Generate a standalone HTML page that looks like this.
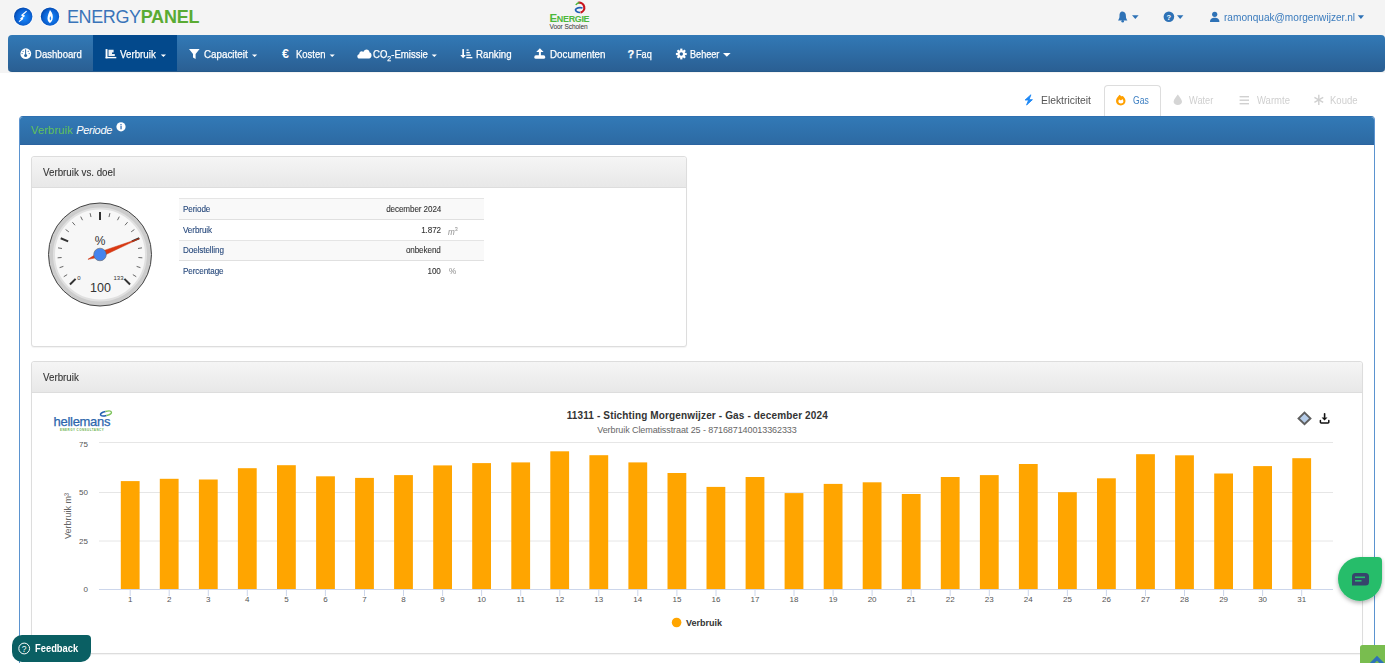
<!DOCTYPE html>
<html><head><meta charset="utf-8">
<style>
*{box-sizing:border-box;margin:0;padding:0}
html,body{width:1385px;height:663px;overflow:hidden;background:#fff;font-family:"Liberation Sans",sans-serif;position:relative}
.abs{position:absolute}
#header{left:0;top:0;width:1385px;height:73px;background:#f4f4f4}
.t{position:absolute;white-space:nowrap;line-height:1}
#nav{left:8px;top:35px;width:1377px;height:37px;border-radius:4px;background:linear-gradient(#3279b6,#2a5f93);border-bottom:1px solid #265a8b}
#nav .active{position:absolute;left:85px;top:0;width:84px;height:36px;background:#03498c}
.nt{color:#fff;font-size:11px;-webkit-text-stroke:0.25px #fff;transform-origin:0 0}
.tabt{font-size:11px;transform-origin:0 0}
#panel{left:19px;top:116px;width:1356px;height:600px;border:1px solid #5b93cf;border-top-color:#2f70b0;border-radius:4px 4px 0 0;background:#fff}
#phead{left:0;top:0;width:1354px;height:28px;background:linear-gradient(#3279b6,#2d6aa3);border-bottom:1px solid #2b63a0;border-radius:3px 3px 0 0}
.ipanel{border:1px solid #ddd;border-radius:3px;background:#fff;box-shadow:0 1px 1px rgba(0,0,0,.05)}
.ihead{left:0;top:0;height:31px;background:linear-gradient(#f5f5f5,#e8e8e8);border-bottom:1px solid #ddd;border-radius:3px 3px 0 0}
.ht{font-size:11px;color:#333;-webkit-text-stroke:0.1px #333;transform:scaleX(0.887);transform-origin:0 0}
.tbl{font-size:9px;letter-spacing:-0.1px;-webkit-text-stroke:0.1px currentColor;margin-top:0.2px;transform:scaleX(0.9);transform-origin:0 0}
.tbl.r{transform-origin:100% 0}
</style></head><body>
<div id="header" class="abs">
  <!-- logo circles -->
  <svg class="abs" style="left:0;top:0" width="70" height="35">
    <defs>
      <radialGradient id="bg1" cx="0.55" cy="0.55" r="0.6">
        <stop offset="0" stop-color="#1a8cff"/><stop offset="0.7" stop-color="#0a5fd0"/><stop offset="1" stop-color="#0040a0"/>
      </radialGradient>
    </defs>
    <circle cx="23.2" cy="16.6" r="10.2" fill="#fbfbfb"/>
    <circle cx="23.2" cy="16.6" r="9.2" fill="url(#bg1)"/>
    <polyline points="26.6,11.1 21.9,15.3 24.3,15.8 20.8,18.7 22.7,18.7 19,21.6" fill="none" stroke="#fff" stroke-width="1.2" stroke-linejoin="round"/>
    <circle cx="50" cy="16.6" r="10.2" fill="#fbfbfb"/>
    <circle cx="50" cy="16.6" r="9.2" fill="url(#bg1)"/>
    <path d="M50 10 C52.5 13 53.5 16 52.5 19.5 C52 21.5 50.5 22.5 50 23 C49 22.5 47.5 21 47.5 18.5 C47.5 15.5 49 12.5 50 10 Z" fill="#fff"/>
    <path d="M50.3 16 C51.3 17.5 51.5 19 50.5 20.5 C49.5 19.5 49.3 18 50.3 16 Z" fill="#2a8af0"/>
  </svg>
  <div class="t" style="left:67px;top:8px;font-size:18px;color:#3a74b9;letter-spacing:-0.4px">ENERGY<b style="color:#5aab33;font-weight:bold;letter-spacing:-0.2px">PANEL</b></div>
  <!-- center logo -->
  <svg class="abs" style="left:545px;top:0" width="50" height="32">
    <path d="M33 2.8 A5 5 0 1 1 35.5 12.6" fill="none" stroke="#c8141e" stroke-width="2.2"/>
    <path d="M30.8 5 C31.6 3.6 33 2.6 34.5 2.4" fill="none" stroke="#49b83a" stroke-width="1.5"/>
    <path d="M37.5 8 C34.5 7.2 31 8 30.5 9.8 C30.8 11.6 33 12.3 35 12.5" fill="none" stroke="#1e5fb4" stroke-width="1.7"/>
    <text x="4.5" y="22" font-family="Liberation Sans" font-weight="bold" fill="#4cb83c" letter-spacing="-0.35"><tspan font-size="11.5">E</tspan><tspan font-size="9">NERGIE</tspan></text>
    <text x="4.5" y="28.7" font-family="Liberation Sans" font-size="6.6" fill="#333" letter-spacing="-0.1">Voor Scholen</text>
  </svg>
  <!-- right icons -->
  <svg class="abs" style="left:1110px;top:5px" width="275" height="25">
    <g fill="#2e72b6">
      <path d="M12.5 6.6 C10 6.6 9.5 8.8 9.5 11 C9.5 13.5 8.6 14.6 8 15.5 L17.4 15.5 C16.8 14.6 15.9 13.5 15.9 11 C15.9 8.8 15 6.6 12.5 6.6 Z"/>
      <circle cx="12.7" cy="16.3" r="1.3"/>
      <path d="M22 10.3 L28.6 10.3 L25.3 14 Z"/>
      <circle cx="58.9" cy="11.8" r="5.3"/>
      <path d="M67 10.3 L73.4 10.3 L70.2 14 Z"/>
      <circle cx="104.7" cy="9.3" r="2.6"/>
      <path d="M100 17 C100 13.8 102 12.8 104.7 12.8 C107.4 12.8 109.4 13.8 109.4 17 Z"/>
      <path d="M247.8 10.3 L254 10.3 L250.9 14 Z"/>
    </g>
    <text x="58.9" y="14.8" font-family="Liberation Sans" font-weight="bold" font-size="7.5" fill="#fff" text-anchor="middle">?</text>
  </svg>
  <div class="t" style="left:1224px;top:12px;font-size:11px;color:#3a7bbd;transform:scaleX(0.919);transform-origin:0 0">ramonquak@morgenwijzer.nl</div>
</div>

<div id="nav" class="abs">
  <div class="active"></div>
  <svg class="abs" style="left:0;top:0" width="740" height="37">
    <g fill="#fff">
      <!-- dashboard gauge icon -->
      <circle cx="17.8" cy="18.7" r="5.4"/>
      <!-- verbruik chart icon -->
      <rect x="97.6" y="14.1" width="1.9" height="9.2"/>
      <rect x="97.6" y="21.9" width="10.7" height="1.4"/>
      <path d="M100.5 14.8 h5.1 v2.8 h-1.6 v1.5 h2.8 v1.9 h-6.3 Z" opacity="0.92"/>
      <!-- filter -->
      <path d="M181 14 h10.6 l-4 5 v5 l-2.6 -1.5 v-3.5 Z"/>
      <!-- euro -->
      <text x="274" y="23.4" font-family="Liberation Sans" font-weight="bold" font-size="12.5">€</text>
      <!-- cloud -->
      <path d="M351.5 23.5 C348.8 23.5 348.6 19.6 351.2 19.2 C351.2 16.6 353.8 15.6 355.3 17 C356.3 13.4 361.3 13.6 361.6 17.6 C364.2 17.8 364.4 23.5 361 23.5 Z"/>
      <!-- ranking -->
      <rect x="454.3" y="14.1" width="1.7" height="6.5"/><path d="M452.3 20 h5.6 l-2.8 3.3 Z"/>
      <rect x="458.6" y="14.4" width="2" height="1.3"/><rect x="458.3" y="17" width="3.5" height="1.3"/><rect x="458.3" y="19.5" width="4.6" height="1.3"/><rect x="458.3" y="22" width="6.1" height="1.3"/>
      <!-- upload -->
      <path d="M531.9 13.3 L535.6 17 H532.9 V21 H530.9 V17 H528.2 Z"/>
      <rect x="526.3" y="20.3" width="10.9" height="3.5" rx="1.6"/>
      <!-- gear -->
      <circle cx="673.3" cy="19" r="3.8"/>
      <g stroke="#fff" stroke-width="2.2">
        <line x1="673.3" y1="13.6" x2="673.3" y2="24.4"/>
        <line x1="667.9" y1="19" x2="678.7" y2="19"/>
        <line x1="669.5" y1="15.2" x2="677.1" y2="22.8"/>
        <line x1="677.1" y1="15.2" x2="669.5" y2="22.8"/>
      </g>
      <!-- carets -->
      <path d="M152.8 19.5 h5.2 l-2.6 2.6 Z"/>
      <path d="M244 19.5 h5.2 l-2.6 2.6 Z"/>
      <path d="M321.6 19.5 h5.2 l-2.6 2.6 Z"/>
      <path d="M423.7 19.5 h5.2 l-2.6 2.6 Z"/>
      <path d="M715 18 h7.6 l-3.8 3.8 Z"/>
    </g>
    <g fill="#2d69a3"><rect x="17.1" y="14.4" width="1" height="5.6"/><circle cx="17.6" cy="20.5" r="1.5"/><circle cx="15.1" cy="16.3" r="0.6"/><circle cx="20.2" cy="16.3" r="0.6"/><circle cx="14.1" cy="18.6" r="0.6"/><circle cx="21.2" cy="18.6" r="0.6"/></g>
    <circle cx="673.3" cy="19" r="1.7" fill="#2e67a0"/>
  </svg>
  <div class="t nt" style="left:27px;top:14px;transform:scaleX(0.87)">Dashboard</div>
  <div class="t nt" style="left:111.8px;top:14px;transform:scaleX(0.886)">Verbruik</div>
  <div class="t nt" style="left:195.7px;top:14px;transform:scaleX(0.892)">Capaciteit</div>
  <div class="t nt" style="left:287.6px;top:14px;transform:scaleX(0.861)">Kosten</div>
  <div class="t nt" style="left:365px;top:14px;transform:scaleX(0.87)">CO<sub style="font-size:8px;vertical-align:-2.5px">2</sub>-Emissie</div>
  <div class="t nt" style="left:467.5px;top:14px;transform:scaleX(0.882)">Ranking</div>
  <div class="t nt" style="left:541.5px;top:14px;transform:scaleX(0.89)">Documenten</div>
  <div class="t nt" style="left:619.6px;top:14px;font-weight:bold">?</div>
  <div class="t nt" style="left:628.3px;top:14px;transform:scaleX(0.833)">Faq</div>
  <div class="t nt" style="left:682.4px;top:14px;transform:scaleX(0.827)">Beheer</div>
</div>

<!-- tabs -->
<div class="abs" style="left:1104px;top:85px;width:57px;height:32px;border:1px solid #ddd;border-bottom:none;border-radius:4px 4px 0 0;background:#fff"></div>
<svg class="abs" style="left:1015px;top:85px" width="370" height="30">
  <path d="M15.9 9.8 L10.1 15 L13.6 15 L11.6 20 L17.4 14.7 L14 14.7 Z" fill="#1e88f5" stroke="#1e88f5" stroke-width="0.9" stroke-linejoin="round"/>
  <path d="M104.6 9.7 C105.4 10.6 106.6 11.6 107.8 11.1 C109.6 12.6 110.5 14.4 110.5 16 C110.5 18.6 108.4 20.4 105.8 20.4 C103.1 20.4 101 18.6 101 16 C101 13.4 102.8 11.6 104.6 9.7 Z" fill="#ffa000"/>
  <path d="M104.2 14.3 C104.8 15.2 105.6 15.4 106.4 15 C107 14.6 107.3 14.2 107.4 14 C108.1 14.9 108.4 15.8 108.4 16.6 C108.4 17.8 107.3 18.5 105.9 18.5 C104.5 18.5 103.4 17.8 103.4 16.6 C103.4 15.7 103.7 14.9 104.2 14.3 Z" fill="#fff"/>
  <path d="M162.8 9.5 C164.5 12 167 14.5 167 16.8 C167 18.8 165.2 20 162.8 20 C160.4 20 158.6 18.8 158.6 16.8 C158.6 14.5 161.1 12 162.8 9.5 Z" fill="#d5d5d5"/>
  <g fill="#d0d0d0"><rect x="224.6" y="11" width="9.4" height="1.4"/><rect x="224.6" y="14.5" width="9.4" height="1.4"/><rect x="224.6" y="18" width="9.4" height="1.4"/></g>
  <g stroke="#d0d0d0" stroke-width="1.4"><line x1="303.8" y1="9.8" x2="303.8" y2="20"/><line x1="299.4" y1="12.4" x2="308.2" y2="17.4"/><line x1="299.4" y1="17.4" x2="308.2" y2="12.4"/></g>
</svg>
<div class="t tabt" style="left:1041px;top:95px;color:#555;transform:scaleX(0.94)">Elektriciteit</div>
<div class="t tabt" style="left:1133.2px;top:95px;color:#3d7fc2;transform:scaleX(0.78)">Gas</div>
<div class="t tabt" style="left:1189px;top:95px;color:#cfcfcf;transform:scaleX(0.84)">Water</div>
<div class="t tabt" style="left:1256.5px;top:95px;color:#cfcfcf;transform:scaleX(0.864)">Warmte</div>
<div class="t tabt" style="left:1329.7px;top:95px;color:#cfcfcf;transform:scaleX(0.865)">Koude</div>

<!-- main panel -->
<div id="panel" class="abs">
  <div id="phead" class="abs">
    <div class="t" style="left:11px;top:8px;font-size:11px;color:#62c15a;letter-spacing:0.2px">Verbruik <i style="color:#fff;letter-spacing:-0.3px">Periode</i></div>
    <svg class="abs" style="left:96px;top:4px" width="12" height="12"><circle cx="5" cy="5.8" r="4.6" fill="#fff"/><rect x="4.4" y="5" width="1.3" height="3.3" fill="#3a74b9"/><circle cx="5" cy="3.7" r="0.8" fill="#3a74b9"/></svg>
  </div>
</div>

<!-- inner panel 1 -->
<div class="abs ipanel" style="left:31px;top:156px;width:656px;height:191px">
  <div class="abs ihead" style="width:654px"></div>
  <div class="t ht" style="left:11px;top:10px">Verbruik vs. doel</div>
</div>
<!-- table -->
<div class="abs" style="left:179px;top:198px;width:305px;height:1px;background:#e5e5e5"></div>
<div class="abs" style="left:179px;top:199px;width:305px;height:20px;background:#f9f9f9"></div>
<div class="abs" style="left:179px;top:219px;width:305px;height:1px;background:#e0e0e0"></div>
<div class="abs" style="left:179px;top:240px;width:305px;height:1px;background:#e5e5e5"></div>
<div class="abs" style="left:179px;top:241px;width:305px;height:19px;background:#f9f9f9"></div>
<div class="abs" style="left:179px;top:260px;width:305px;height:1px;background:#e0e0e0"></div>
<div class="t tbl" style="left:183px;top:205px;color:#24467a">Periode</div>
<div class="t tbl" style="left:183px;top:226px;color:#24467a">Verbruik</div>
<div class="t tbl" style="left:183px;top:246px;color:#24467a">Doelstelling</div>
<div class="t tbl" style="left:183px;top:267px;color:#24467a">Percentage</div>
<div class="t tbl r" style="right:944px;top:205px;color:#333">december 2024</div>
<div class="t tbl r" style="right:944px;top:226px;color:#333">1.872</div>
<div class="t tbl" style="left:448px;top:226px;color:#999"><i>m</i><sup style="font-size:6px">3</sup></div>
<div class="t tbl r" style="right:944px;top:246px;color:#333">onbekend</div>
<div class="t tbl r" style="right:944px;top:267px;color:#333">100</div>
<div class="t tbl" style="left:449px;top:267px;color:#999">%</div>

<!-- inner panel 2 -->
<div class="abs ipanel" style="left:31px;top:361px;width:1332px;height:293px">
  <div class="abs ihead" style="width:1330px"></div>
  <div class="t ht" style="left:11px;top:10px">Verbruik</div>
</div>

<!-- SVG overlay for gauge and chart -->
<svg class="abs" style="left:0;top:0" width="1385" height="663" font-family="Liberation Sans">
  <!-- gauge -->
  <circle cx="100" cy="254.5" r="51.5" fill="#ccc" stroke="#444" stroke-width="1"/>
  <circle cx="100" cy="254.5" r="46" fill="#f7f7f7" stroke="#e0e0e0" stroke-width="2"/>
  <line x1="75.60" y1="278.90" x2="69.95" y2="284.55" stroke="#333" stroke-width="2"/>
<line x1="67.17" y1="274.62" x2="63.76" y2="276.71" stroke="#666" stroke-width="1"/>
<line x1="63.38" y1="266.40" x2="59.58" y2="267.63" stroke="#666" stroke-width="1"/>
<line x1="61.62" y1="257.52" x2="57.63" y2="257.83" stroke="#666" stroke-width="1"/>
<line x1="61.97" y1="248.48" x2="58.02" y2="247.85" stroke="#666" stroke-width="1"/>
<line x1="68.13" y1="241.30" x2="60.74" y2="238.24" stroke="#333" stroke-width="2"/>
<line x1="68.85" y1="231.87" x2="65.62" y2="229.52" stroke="#666" stroke-width="1"/>
<line x1="75.00" y1="225.22" x2="72.40" y2="222.18" stroke="#666" stroke-width="1"/>
<line x1="82.52" y1="220.20" x2="80.71" y2="216.63" stroke="#666" stroke-width="1"/>
<line x1="91.01" y1="217.06" x2="90.08" y2="213.17" stroke="#666" stroke-width="1"/>
<line x1="100.00" y1="220.00" x2="100.00" y2="212.00" stroke="#333" stroke-width="2"/>
<line x1="108.99" y1="217.06" x2="109.92" y2="213.17" stroke="#666" stroke-width="1"/>
<line x1="117.48" y1="220.20" x2="119.29" y2="216.63" stroke="#666" stroke-width="1"/>
<line x1="125.00" y1="225.22" x2="127.60" y2="222.18" stroke="#666" stroke-width="1"/>
<line x1="131.15" y1="231.87" x2="134.38" y2="229.52" stroke="#666" stroke-width="1"/>
<line x1="131.87" y1="241.30" x2="139.26" y2="238.24" stroke="#333" stroke-width="2"/>
<line x1="138.03" y1="248.48" x2="141.98" y2="247.85" stroke="#666" stroke-width="1"/>
<line x1="138.38" y1="257.52" x2="142.37" y2="257.83" stroke="#666" stroke-width="1"/>
<line x1="136.62" y1="266.40" x2="140.42" y2="267.63" stroke="#666" stroke-width="1"/>
<line x1="132.83" y1="274.62" x2="136.24" y2="276.71" stroke="#666" stroke-width="1"/>
<line x1="124.40" y1="278.90" x2="130.05" y2="284.55" stroke="#333" stroke-width="2"/>
  <text x="100" y="244.5" text-anchor="middle" font-size="12" fill="#333">%</text>
  <text x="79" y="279.5" text-anchor="middle" font-size="6" fill="#333">0</text>
  <text x="118.5" y="279.5" text-anchor="middle" font-size="6" fill="#333">133</text>
  <text x="100.5" y="291.5" text-anchor="middle" font-size="12.5" fill="#333">100</text>
  <polygon points="139.41,238.58 100.96,256.87 87.95,259.37 99.04,252.13" fill="#dc3912" stroke="#c63310" stroke-width="0.5"/>
  <circle cx="100" cy="254.5" r="6.3" fill="#4684ee" stroke="#666" stroke-width="0.6"/>

  <!-- chart -->
  <g stroke="#e6e6e6" stroke-width="1">
    <line x1="99" y1="442.5" x2="1333" y2="442.5"/>
    <line x1="99" y1="492.5" x2="1333" y2="492.5"/>
    <line x1="99" y1="541" x2="1333" y2="541"/>
  </g>
  <rect x="120.8" y="481.1" width="18.8" height="108.4" fill="#ffa500"/>
<rect x="159.8" y="478.8" width="18.8" height="110.7" fill="#ffa500"/>
<rect x="198.9" y="479.5" width="18.8" height="110.0" fill="#ffa500"/>
<rect x="237.9" y="468.2" width="18.8" height="121.3" fill="#ffa500"/>
<rect x="277.0" y="465.2" width="18.8" height="124.3" fill="#ffa500"/>
<rect x="316.1" y="476.3" width="18.8" height="113.2" fill="#ffa500"/>
<rect x="355.1" y="477.9" width="18.8" height="111.6" fill="#ffa500"/>
<rect x="394.1" y="475.1" width="18.8" height="114.4" fill="#ffa500"/>
<rect x="433.2" y="465.4" width="18.8" height="124.1" fill="#ffa500"/>
<rect x="472.2" y="463.1" width="18.8" height="126.4" fill="#ffa500"/>
<rect x="511.3" y="462.4" width="18.8" height="127.1" fill="#ffa500"/>
<rect x="550.3" y="451.3" width="18.8" height="138.2" fill="#ffa500"/>
<rect x="589.4" y="455.2" width="18.8" height="134.3" fill="#ffa500"/>
<rect x="628.4" y="462.4" width="18.8" height="127.1" fill="#ffa500"/>
<rect x="667.5" y="473.0" width="18.8" height="116.5" fill="#ffa500"/>
<rect x="706.5" y="486.9" width="18.8" height="102.6" fill="#ffa500"/>
<rect x="745.6" y="477.0" width="18.8" height="112.5" fill="#ffa500"/>
<rect x="784.6" y="493.1" width="18.8" height="96.4" fill="#ffa500"/>
<rect x="823.7" y="483.9" width="18.8" height="105.6" fill="#ffa500"/>
<rect x="862.7" y="482.3" width="18.8" height="107.2" fill="#ffa500"/>
<rect x="901.8" y="494.0" width="18.8" height="95.5" fill="#ffa500"/>
<rect x="940.8" y="477.0" width="18.8" height="112.5" fill="#ffa500"/>
<rect x="979.9" y="475.1" width="18.8" height="114.4" fill="#ffa500"/>
<rect x="1018.9" y="464.0" width="18.8" height="125.5" fill="#ffa500"/>
<rect x="1058.0" y="492.2" width="18.8" height="97.3" fill="#ffa500"/>
<rect x="1097.0" y="478.3" width="18.8" height="111.2" fill="#ffa500"/>
<rect x="1136.1" y="454.2" width="18.8" height="135.3" fill="#ffa500"/>
<rect x="1175.1" y="455.3" width="18.8" height="134.2" fill="#ffa500"/>
<rect x="1214.2" y="473.5" width="18.8" height="116.0" fill="#ffa500"/>
<rect x="1253.2" y="466.1" width="18.8" height="123.4" fill="#ffa500"/>
<rect x="1292.3" y="458.2" width="18.8" height="131.3" fill="#ffa500"/>
  <line x1="99" y1="589.5" x2="1333" y2="589.5" stroke="#ccd6eb" stroke-width="1"/>
  <line x1="130.2" y1="590" x2="130.2" y2="596" stroke="#ccd6eb" stroke-width="1"/>
<line x1="169.2" y1="590" x2="169.2" y2="596" stroke="#ccd6eb" stroke-width="1"/>
<line x1="208.3" y1="590" x2="208.3" y2="596" stroke="#ccd6eb" stroke-width="1"/>
<line x1="247.3" y1="590" x2="247.3" y2="596" stroke="#ccd6eb" stroke-width="1"/>
<line x1="286.4" y1="590" x2="286.4" y2="596" stroke="#ccd6eb" stroke-width="1"/>
<line x1="325.4" y1="590" x2="325.4" y2="596" stroke="#ccd6eb" stroke-width="1"/>
<line x1="364.5" y1="590" x2="364.5" y2="596" stroke="#ccd6eb" stroke-width="1"/>
<line x1="403.5" y1="590" x2="403.5" y2="596" stroke="#ccd6eb" stroke-width="1"/>
<line x1="442.6" y1="590" x2="442.6" y2="596" stroke="#ccd6eb" stroke-width="1"/>
<line x1="481.6" y1="590" x2="481.6" y2="596" stroke="#ccd6eb" stroke-width="1"/>
<line x1="520.7" y1="590" x2="520.7" y2="596" stroke="#ccd6eb" stroke-width="1"/>
<line x1="559.8" y1="590" x2="559.8" y2="596" stroke="#ccd6eb" stroke-width="1"/>
<line x1="598.8" y1="590" x2="598.8" y2="596" stroke="#ccd6eb" stroke-width="1"/>
<line x1="637.8" y1="590" x2="637.8" y2="596" stroke="#ccd6eb" stroke-width="1"/>
<line x1="676.9" y1="590" x2="676.9" y2="596" stroke="#ccd6eb" stroke-width="1"/>
<line x1="716.0" y1="590" x2="716.0" y2="596" stroke="#ccd6eb" stroke-width="1"/>
<line x1="755.0" y1="590" x2="755.0" y2="596" stroke="#ccd6eb" stroke-width="1"/>
<line x1="794.0" y1="590" x2="794.0" y2="596" stroke="#ccd6eb" stroke-width="1"/>
<line x1="833.1" y1="590" x2="833.1" y2="596" stroke="#ccd6eb" stroke-width="1"/>
<line x1="872.1" y1="590" x2="872.1" y2="596" stroke="#ccd6eb" stroke-width="1"/>
<line x1="911.2" y1="590" x2="911.2" y2="596" stroke="#ccd6eb" stroke-width="1"/>
<line x1="950.2" y1="590" x2="950.2" y2="596" stroke="#ccd6eb" stroke-width="1"/>
<line x1="989.3" y1="590" x2="989.3" y2="596" stroke="#ccd6eb" stroke-width="1"/>
<line x1="1028.3" y1="590" x2="1028.3" y2="596" stroke="#ccd6eb" stroke-width="1"/>
<line x1="1067.4" y1="590" x2="1067.4" y2="596" stroke="#ccd6eb" stroke-width="1"/>
<line x1="1106.4" y1="590" x2="1106.4" y2="596" stroke="#ccd6eb" stroke-width="1"/>
<line x1="1145.5" y1="590" x2="1145.5" y2="596" stroke="#ccd6eb" stroke-width="1"/>
<line x1="1184.5" y1="590" x2="1184.5" y2="596" stroke="#ccd6eb" stroke-width="1"/>
<line x1="1223.6" y1="590" x2="1223.6" y2="596" stroke="#ccd6eb" stroke-width="1"/>
<line x1="1262.6" y1="590" x2="1262.6" y2="596" stroke="#ccd6eb" stroke-width="1"/>
<line x1="1301.7" y1="590" x2="1301.7" y2="596" stroke="#ccd6eb" stroke-width="1"/>
  <g font-size="8" fill="#555">
  <text x="130.2" y="602.3" text-anchor="middle">1</text>
<text x="169.2" y="602.3" text-anchor="middle">2</text>
<text x="208.3" y="602.3" text-anchor="middle">3</text>
<text x="247.3" y="602.3" text-anchor="middle">4</text>
<text x="286.4" y="602.3" text-anchor="middle">5</text>
<text x="325.4" y="602.3" text-anchor="middle">6</text>
<text x="364.5" y="602.3" text-anchor="middle">7</text>
<text x="403.5" y="602.3" text-anchor="middle">8</text>
<text x="442.6" y="602.3" text-anchor="middle">9</text>
<text x="481.6" y="602.3" text-anchor="middle">10</text>
<text x="520.7" y="602.3" text-anchor="middle">11</text>
<text x="559.8" y="602.3" text-anchor="middle">12</text>
<text x="598.8" y="602.3" text-anchor="middle">13</text>
<text x="637.8" y="602.3" text-anchor="middle">14</text>
<text x="676.9" y="602.3" text-anchor="middle">15</text>
<text x="716.0" y="602.3" text-anchor="middle">16</text>
<text x="755.0" y="602.3" text-anchor="middle">17</text>
<text x="794.0" y="602.3" text-anchor="middle">18</text>
<text x="833.1" y="602.3" text-anchor="middle">19</text>
<text x="872.1" y="602.3" text-anchor="middle">20</text>
<text x="911.2" y="602.3" text-anchor="middle">21</text>
<text x="950.2" y="602.3" text-anchor="middle">22</text>
<text x="989.3" y="602.3" text-anchor="middle">23</text>
<text x="1028.3" y="602.3" text-anchor="middle">24</text>
<text x="1067.4" y="602.3" text-anchor="middle">25</text>
<text x="1106.4" y="602.3" text-anchor="middle">26</text>
<text x="1145.5" y="602.3" text-anchor="middle">27</text>
<text x="1184.5" y="602.3" text-anchor="middle">28</text>
<text x="1223.6" y="602.3" text-anchor="middle">29</text>
<text x="1262.6" y="602.3" text-anchor="middle">30</text>
<text x="1301.7" y="602.3" text-anchor="middle">31</text>
  </g>
  <g font-size="8" fill="#555" text-anchor="end">
    <text x="88" y="446.5">75</text>
    <text x="88" y="495">50</text>
    <text x="88" y="543.5">25</text>
    <text x="88" y="592">0</text>
  </g>
  <text transform="translate(71,516) rotate(-90)" text-anchor="middle" font-size="9" fill="#666">Verbruik m³</text>
  <text x="697.3" y="418.5" text-anchor="middle" font-size="10" font-weight="bold" fill="#333" letter-spacing="0.14">11311 - Stichting Morgenwijzer - Gas - december 2024</text>
  <text x="697" y="432.5" text-anchor="middle" font-size="9" fill="#666" letter-spacing="-0.09">Verbruik Clematisstraat 25 - 871687140013362333</text>
  <circle cx="676.6" cy="622.5" r="4.8" fill="#ffa500"/>
  <text x="686" y="626" font-size="9" font-weight="bold" fill="#333">Verbruik</text>
  <!-- hellemans logo -->
  <text x="53.6" y="425.8" font-size="13" fill="#2c65ad" stroke="#2c65ad" stroke-width="0.25" letter-spacing="-0.3">hellemans</text>
  <text x="60" y="430.6" font-size="3" font-weight="bold" fill="#6ab04c" letter-spacing="0.45">ENERGY CONSULTANCY</text>
  <g transform="rotate(-14 106 413.5)"><path d="M106 411.4 A5.6 2.1 0 0 0 106 415.6" fill="none" stroke="#1f5fb0" stroke-width="1.6"/><path d="M106 411.4 A5.6 2.1 0 0 1 106 415.6" fill="none" stroke="#7cc35a" stroke-width="1.4"/></g>
  <!-- export icons -->
  <path d="M1304.5 412.6 L1310.4 418.4 L1304.5 424.2 L1298.6 418.4 Z" fill="#b6cde9" stroke="#606060" stroke-width="2"/>
  <g fill="#111"><rect x="1323.8" y="413" width="1.6" height="5" rx="0.8"/><path d="M1321.6 417.4 h5.9 l-2.95 3 Z"/></g>
  <path d="M1320.4 420.6 v1.6 a0.8 0.8 0 0 0 0.8 0.8 h6.8 a0.8 0.8 0 0 0 0.8 -0.8 v-1.6" fill="none" stroke="#111" stroke-width="1.5" stroke-linecap="round"/>
  <!-- chat button -->
  <defs><filter id="sh" x="-30%" y="-30%" width="160%" height="160%"><feDropShadow dx="0" dy="2" stdDeviation="2" flood-opacity="0.3"/></filter></defs>
  <path d="M1360 557 h18 a4 4 0 0 1 4 4 v18 a22 22 0 1 1 -22 -22 Z" fill="#27bd6b" filter="url(#sh)"/>
  <path d="M1352 585.6 V576.5 a3.5 3.5 0 0 1 3.5 -3.5 h10 a3.5 3.5 0 0 1 3.5 3.5 v5.6 a3.5 3.5 0 0 1 -3.5 3.5 Z" fill="#36456c"/>
  <rect x="1355" y="576.5" width="10" height="1.6" fill="#27bd6b"/>
  <rect x="1355" y="580" width="6.5" height="1.6" fill="#27bd6b"/>
  <!-- back to top -->
  <path d="M1360 663 V647.5 a2.5 2.5 0 0 1 2.5 -2.5 H1385 V663 Z" fill="#79bd4f"/>
  <path d="M1370.3 665 L1377 658.2 L1383.7 665" fill="none" stroke="#2e72b8" stroke-width="3.4"/>
</svg>

<!-- feedback -->
<div class="abs" style="left:12px;top:635px;width:79px;height:27px;background:#0a5f63;border-radius:10px 4px 10px 10px"></div>
<svg class="abs" style="left:12px;top:635px" width="30" height="27"><circle cx="12.2" cy="13.5" r="5.4" fill="none" stroke="#fff" stroke-width="1"/><text x="12.1" y="16.6" font-family="Liberation Sans" font-size="8.5" fill="#fff" text-anchor="middle">?</text></svg>
<div class="t" style="left:35px;top:643.8px;font-size:10px;font-weight:bold;color:#fff;transform:scaleX(0.936);transform-origin:0 0">Feedback</div>
</body></html>
